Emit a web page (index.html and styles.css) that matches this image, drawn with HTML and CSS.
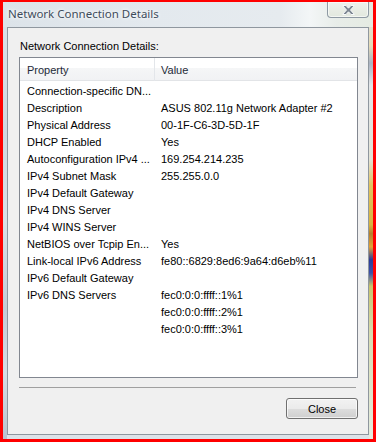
FILE: index.html
```html
<!DOCTYPE html>
<html lang="en">
	<head>
		<meta charset="UTF-8" />
		<title>Network Connection Details</title>
		<link rel="stylesheet" href="styles.css">
	</head>
	<body>
		<div class="window">
			<div class="titlebar">
				<div class="title">Network Connection Details</div>
				<div class="caption-close">
					<svg width="15" height="12" viewBox="0 0 15 12">
						<path d="M1.5 1.5 H5 L7.5 4.2 L10 1.5 H13.5 L9.5 6 L13.5 10.5 H10 L7.5 7.8 L5 10.5 H1.5 L5.5 6 Z" fill="#7d8792" stroke="#f6f8f9" stroke-width="1" stroke-linejoin="round" />
					</svg>
				</div>
			</div>
			<div class="client">
				<div class="label">Network Connection Details:</div>
				<div class="list">
					<div class="list-header">
						<div class="col">Property</div>
						<div class="col">Value</div>
					</div>
					<div class="rows">
						<div class="row"><span>Connection-specific DN...</span><span></span></div>
						<div class="row"><span>Description</span><span>ASUS 802.11g Network Adapter #2</span></div>
						<div class="row"><span>Physical Address</span><span>00-1F-C6-3D-5D-1F</span></div>
						<div class="row"><span>DHCP Enabled</span><span>Yes</span></div>
						<div class="row"><span>Autoconfiguration IPv4 ...</span><span>169.254.214.235</span></div>
						<div class="row"><span>IPv4 Subnet Mask</span><span>255.255.0.0</span></div>
						<div class="row"><span>IPv4 Default Gateway</span><span></span></div>
						<div class="row"><span>IPv4 DNS Server</span><span></span></div>
						<div class="row"><span>IPv4 WINS Server</span><span></span></div>
						<div class="row"><span>NetBIOS over Tcpip En...</span><span>Yes</span></div>
						<div class="row"><span>Link-local IPv6 Address</span><span>fe80::6829:8ed6:9a64:d6eb%11</span></div>
						<div class="row"><span>IPv6 Default Gateway</span><span></span></div>
						<div class="row"><span>IPv6 DNS Servers</span><span>fec0:0:0:ffff::1%1</span></div>
						<div class="row"><span></span><span>fec0:0:0:ffff::2%1</span></div>
						<div class="row"><span></span><span>fec0:0:0:ffff::3%1</span></div>
					</div>
				</div>
				<div class="separator"></div>
				<button class="btn">Close</button>
			</div>
		</div>
	</body>
</html>
```

FILE: styles.css
```css
* {
	margin: 0;
	padding: 0;
	box-sizing: border-box;
}

html,
body {
	width: 376px;
	height: 442px;
}

body {
	background-color: #ff0000;
	padding: 2px 3px 3px 3px;
	display: flex;
	font-family: "Liberation Sans", Arial, sans-serif;
	font-size: 11px;
	color: #000;
}

.window {
	flex: 1;
	display: flex;
	flex-direction: column;
	padding: 0 4px 4px 4px;
	background:
		linear-gradient(
				to bottom,
				#dfe5e9 0%,
				#e6dcb8 10%,
				#aab3c2 14%,
				#e2e6e9 19%,
				#e3e3d6 36%,
				#e2c45e 42%,
				#d8b440 51%,
				#b5802c 53%,
				#e2a236 56%,
				#2b3c98 59%,
				#3d50a6 62%,
				#c9c46c 65%,
				#d9dcb2 76%,
				#e4ece0 100%
			)
			right top / 4px 100% no-repeat,
		linear-gradient(
				to bottom,
				#dbe2e8 0%,
				#cfd8e0 30%,
				#d9e0e6 50%,
				#c3ccd6 70%,
				#d5dde4 85%,
				#b9c4cf 100%
			)
			left top / 4px 100% no-repeat,
		#dce3e9;
}

.titlebar {
	height: 25px;
	display: flex;
	justify-content: space-between;
	align-items: flex-start;
	background: linear-gradient(
		to right,
		#dce3e9 0%,
		#e3e9ee 40%,
		#e6ebef 75%,
		#f3f6f7 83%,
		#e8ede9 90%,
		#e5ebe2 100%
	);
	margin: 0 -4px;
	padding: 0 4px;
}

.title {
	padding: 4px 0 0 1px;
	font-family: "Noto Sans", "Liberation Sans", sans-serif;
	font-size: 11.5px;
	line-height: 15px;
	color: #3e4c5b;
	text-shadow: 0 0 5px #fff, 0 0 3px #fff;
}

.caption-close {
	width: 42px;
	height: 16px;
	display: flex;
	align-items: center;
	justify-content: center;
	border: 1px solid #8e99a3;
	border-top: none;
	border-radius: 0 0 4px 4px;
	background: linear-gradient(to bottom, #eef1ec, #e2e8de);
	box-shadow: inset 0 0 0 1px rgba(255, 255, 255, 0.6);
}

.client {
	flex: 1;
	display: flex;
	flex-direction: column;
	background-color: #f0f0f0;
	border: 1px solid #8f979f;
	padding: 12px 10px 15px 11px;
}

.label {
	line-height: 13px;
	padding-left: 1px;
}

.list {
	flex: 1;
	margin-top: 4px;
	background: #fff;
	border: 1px solid #828790;
}

.list-header {
	display: grid;
	grid-template-columns: 135px 1fr;
	height: 23px;
	border-bottom: 1px solid #e2e4e7;
	background: linear-gradient(
		to bottom,
		#ffffff 0%,
		#ffffff 45%,
		#f5f6f7 46%,
		#f1f2f4 100%
	);
}

.list-header .col {
	line-height: 22px;
	padding: 1px 0 0 6px;
	color: #1e2a38;
}

.list-header .col:first-child {
	padding-left: 7px;
	border-right: 1px solid #e3e6ea;
}

.rows {
	padding-top: 2px;
}

.row {
	display: grid;
	grid-template-columns: 135px 1fr;
	height: 17px;
	line-height: 17px;
	white-space: nowrap;
}

.row span:first-child {
	padding-left: 7px;
	overflow: hidden;
}

.row span:last-child {
	padding-left: 6px;
}

.separator {
	margin: 9px 2px 0 0;
	border-top: 1px solid #a0a0a0;
}

.btn {
	align-self: flex-end;
	margin-top: 10px;
	width: 72px;
	height: 21px;
	font-family: "Liberation Sans", Arial, sans-serif;
	font-size: 11px;
	color: #000;
	border: 1px solid #707070;
	border-radius: 3px;
	background: linear-gradient(
		to bottom,
		#f2f2f2 0%,
		#ebebeb 50%,
		#dddddd 51%,
		#cfcfcf 100%
	);
	box-shadow: inset 0 0 0 1px rgba(255, 255, 255, 0.7);
}
```
